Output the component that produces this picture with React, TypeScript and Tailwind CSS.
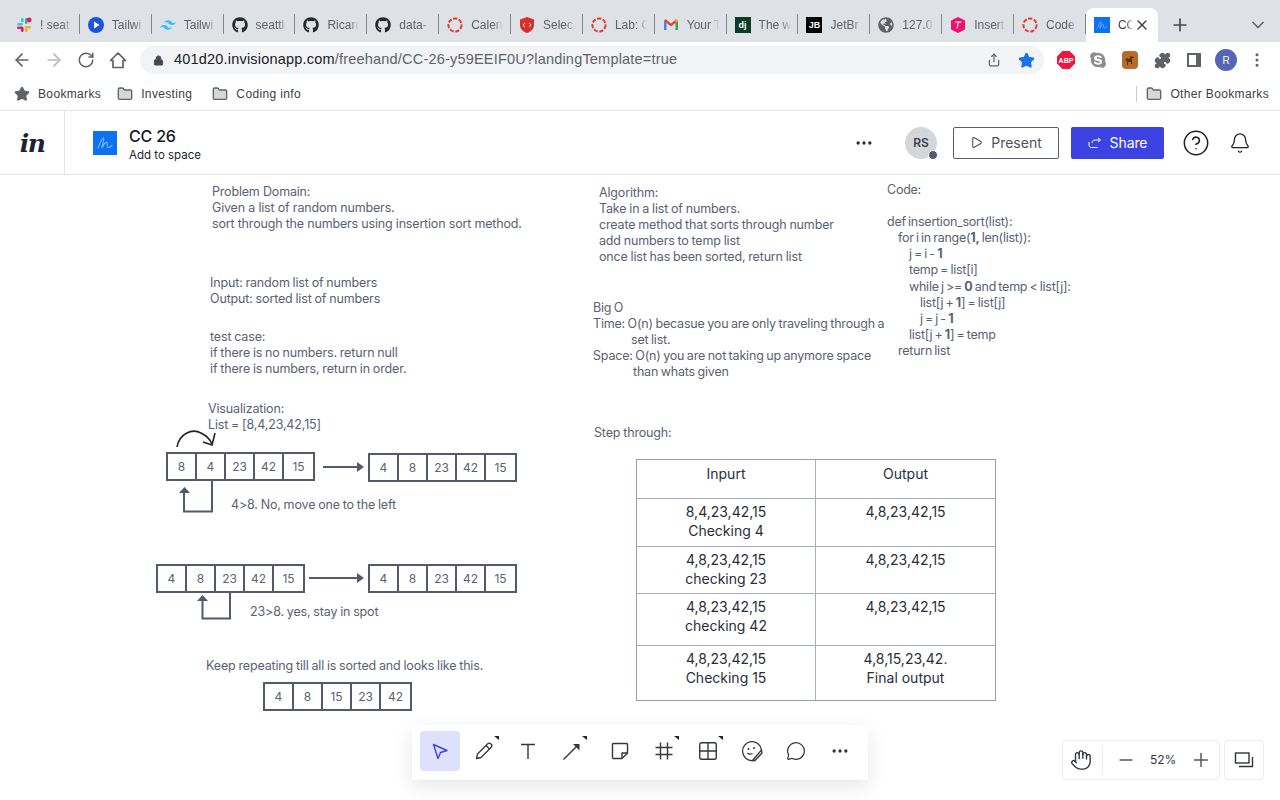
import { ReactNode } from "react";
import {
  ArrowLeft,
  ArrowRight,
  Bell,
  ChevronDown,
  CircleHelp,
  Ellipsis,
  EllipsisVertical,
  Folder,
  Grid2x2,
  Hand,
  Lock,
  MessageCircle,
  Minus,
  Play,
  Plus,
  Puzzle,
  RotateCw,
  Share,
  Star,
  X,
} from "lucide-react";
import { FaGithub, FaGlobeAmericas, FaSkype } from "react-icons/fa";
import { SiTailwindcss } from "react-icons/si";

const Slack = () => (
  <svg viewBox="0 0 16 16" className="w-4 h-4">
    <rect x="1" y="6" width="6" height="2.6" rx="1.3" fill="#36c5f0" />
    <rect x="5" y="1" width="2.6" height="4.2" rx="1.3" fill="#36c5f0" />
    <rect x="9" y="1" width="2.6" height="6" rx="1.3" fill="#2eb67d" />
    <circle cx="13.2" cy="3" r="2.4" fill="#e01e5a" />
    <rect x="9" y="9" width="6" height="2.6" rx="1.3" fill="#ecb22e" />
    <rect x="9" y="11" width="2.6" height="4" rx="1.3" fill="#ecb22e" />
    <rect x="1" y="9.4" width="6" height="2.6" rx="1.3" fill="#e01e5a" />
    <rect x="5" y="10" width="2.6" height="5" rx="1.3" fill="#e01e5a" />
  </svg>
);

const PlayCircle = () => (
  <svg viewBox="0 0 16 16" className="w-4 h-4">
    <circle cx="8" cy="8" r="8" fill="#1a56db" />
    <path d="M6 4.5 11.5 8 6 11.5z" fill="#fff" />
  </svg>
);

const RedRing = () => (
  <svg viewBox="0 0 16 16" className="w-4 h-4">
    <circle cx="8" cy="8" r="6.6" fill="none" stroke="#e8392f" strokeWidth="2" strokeDasharray="4.2 1.6" />
  </svg>
);

const Shield = () => (
  <svg viewBox="0 0 16 16" className="w-4 h-4">
    <path d="M8 0 15 2.5V8c0 4-3 6.6-7 8C4 14.600 1 12 1 8V2.500z" fill="#d9302c" />
    <path d="M6 6 4 8l2 2M10 6l2 2-2 2" fill="none" stroke="#fff" strokeWidth="1" />
  </svg>
);

const Gmail = () => (
  <svg viewBox="0 0 16 16" className="w-4 h-4">
    <path d="M1 13V4l2.500 1.500V13z" fill="#4285f4" />
    <path d="M15 13V4l-2.500 1.500V13z" fill="#34a853" />
    <path d="M1 4c0-1.500 1.500-2 2.500-1.200L8 6.500 12.500 2.800C13.500 2 15 2.500 15 4l-7 5.500z" fill="#ea4335" />
    <path d="M12.500 5.500 15 4c0-.8-.5-1.400-1-1.500l-1.500.3z" fill="#fbbc04" />
  </svg>
);

const Badge = ({ bg, children }: { bg: string; children: ReactNode }) => (
  <div className={`w-4 h-4 flex items-center justify-center text-white font-bold text-[9px] leading-none ${bg}`}>
    {children}
  </div>
);

const Hexagon = () => (
  <svg viewBox="0 0 16 16" className="w-4 h-4">
    <path d="M8 0 15 3.500v9L8 16 1 12.500v-9z" fill="#f0116f" />
    <path d="M5 5h6.500M8.500 5 7 11.500" stroke="#fff" strokeWidth="1" fill="none" />
  </svg>
);

const Squiggle = ({ className }: { className: string }) => (
  <div className={`bg-[#0b73f0] flex items-center justify-center ${className}`}>
    <svg viewBox="0 0 24 24" className="w-full h-full">
      <path
        d="M5 17 C7 12 9 7 10.500 7 C11.500 8 9 15 9 17 C10.500 13 13 10.500 14 11.500 C14.500 13 13.500 16 15 16.500 C16.500 16.500 18 15.500 19 14.500"
        fill="none"
        stroke="#7fb6f7"
        strokeWidth="1.100"
        strokeLinecap="round"
      />
    </svg>
  </div>
);

// labels are only what is visible before the tab fades out
const tabs: { icon: ReactNode; label: string }[] = [
  { icon: <Slack />, label: "! seat" },
  { icon: <PlayCircle />, label: "Tailwi" },
  { icon: <SiTailwindcss className="w-4 h-4 text-[#38bdf8]" />, label: "Tailwi" },
  { icon: <FaGithub className="w-4 h-4 text-[#24292f]" />, label: "seattl" },
  { icon: <FaGithub className="w-4 h-4 text-[#24292f]" />, label: "Ricard" },
  { icon: <FaGithub className="w-4 h-4 text-[#24292f]" />, label: "data-" },
  { icon: <RedRing />, label: "Calen" },
  { icon: <Shield />, label: "Selec" },
  { icon: <RedRing />, label: "Lab: C" },
  { icon: <Gmail />, label: "Your T" },
  { icon: <Badge bg="bg-[#0c3c26]">dj</Badge>, label: "The w" },
  { icon: <Badge bg="bg-black">JB</Badge>, label: "JetBr" },
  { icon: <FaGlobeAmericas className="w-4 h-4 text-[#5f6368]" />, label: "127.0" },
  { icon: <Hexagon />, label: "Insert" },
  { icon: <RedRing />, label: "Code" },
];

function TabStrip() {
  return (
    <div className="h-[42px] bg-[#dee1e6] flex items-end pl-2">
      {tabs.map((tab, i) => (
        <div key={i} className="w-[71.870px] h-[34px] flex items-center pl-2 gap-2 relative shrink-0">
          <div className="w-4 h-4 shrink-0">{tab.icon}</div>
          <span className="w-[32px] whitespace-nowrap text-xs text-[#5f6368] [mask-image:linear-gradient(to_right,black_70%,transparent)]">
            {tab.label}
          </span>
          <div className="absolute right-0 top-[6px] h-5 w-px bg-[#80868b]" />
        </div>
      ))}
      <div className="relative w-[72px] h-[34px] bg-white rounded-t-lg flex items-center pl-2 gap-2 shrink-0">
        <Squiggle className="w-4 h-4 shrink-0" />
        <span className="whitespace-nowrap text-xs text-[#3c4043] [mask-image:linear-gradient(to_right,black_50%,transparent_90%)]">CC</span>
        <div className="absolute left-[48px] top-[9px] w-4 h-4 bg-white">
          <X className="w-4 h-4 text-[#3c4043]" />
        </div>
      </div>
      <Plus className="w-5 h-5 text-[#45494e] ml-[12px] mb-[7px]" />
      <ChevronDown className="w-5 h-5 text-[#5f6368] ml-[58px] mb-[7px]" />
    </div>
  );
}

function AddressBar() {
  return (
    <div className="h-9 bg-white flex items-center">
      <div className="w-[140px] flex items-center text-[#5f6368] pl-[12px] gap-[12px] shrink-0">
        <ArrowLeft className="w-5 h-5" />
        <ArrowRight className="w-5 h-5 text-[#b5b8bc]" />
        <RotateCw className="w-5 h-5 p-px" />
        <svg viewBox="0 0 20 20" className="w-5 h-5" fill="none" stroke="currentColor" strokeWidth="1.700" strokeLinejoin="round">
          <path d="M10 3 2.500 10.500H5V17.500H15V10.500H17.500z" />
        </svg>
      </div>
      <div className="w-[904px] h-7 rounded-full bg-[#f1f3f4] flex items-center pl-[13px] pr-[9px] shrink-0">
        <Lock className="w-[11px] h-[11px] text-[#45494e] fill-[#45494e]" />
        <span className="ml-[10px] text-[14.500px] text-[#5f6368] tracking-[0.2px] whitespace-nowrap">
          <span className="text-[#202124]">401d20.invisionapp.com</span>/freehand/CC-26-y59EEIF0U?landingTemplate=true
        </span>
        <Share className="w-[14px] h-[16px] text-[#5f6368] ml-auto mr-[17px]" />
        <Star className="w-[17px] h-[17px] text-[#1a73e8] fill-[#1a73e8]" />
      </div>
      <div className="flex items-center ml-[13px]">
        <div className="w-[18px] h-[18px] bg-[#f0153c] [clip-path:polygon(30%_0,70%_0,100%_30%,100%_70%,70%_100%,30%_100%,0_70%,0_30%)] flex items-center justify-center text-white font-bold text-[7px] leading-none">
          ABP
        </div>
        <FaSkype className="w-[18px] h-[18px] text-[#8a8d91] ml-[14px]" />
        <div className="w-4 h-[18px] bg-[#b8692c] rounded-sm ml-[15px] flex items-center justify-center">
          <svg viewBox="0 0 12 12" className="w-3 h-3">
            <path d="M1 6c1 0 1-2 2-2s1 1 2 1 1-3 2-3 1 1 3 1v1H8v6H7V8H4v3H3V7L1 6z" fill="#5d3212" />
          </svg>
        </div>
        <Puzzle className="w-[17px] h-[17px] text-[#5f6368] fill-[#5f6368] ml-[16px]" />
        <div className="w-[14px] h-[14px] border-2 border-r-[5px] border-[#5f6368] ml-[16px]" />
        <div className="w-[22px] h-[22px] rounded-full bg-[#5565b8] text-white text-[10px] flex items-center justify-center ml-[14px]">
          R
        </div>
        <EllipsisVertical className="w-[18px] h-[18px] text-[#5f6368] ml-[11px]" />
      </div>
    </div>
  );
}

function BookmarkBar() {
  const item = "flex items-center gap-2 text-xs text-[#3c4043] whitespace-nowrap tracking-[0.35px]";
  return (
    <div className="h-8 bg-white flex items-center pl-[14px]">
      <div className={item}>
        <Star className="w-4 h-4 text-[#5f6368] fill-[#5f6368]" />
        Bookmarks
      </div>
      <div className={`${item} ml-[16px]`}>
        <Folder className="w-4 h-4 text-[#5f6368] fill-[#d5d7da]" />
        Investing
      </div>
      <div className={`${item} ml-[20px]`}>
        <Folder className="w-4 h-4 text-[#5f6368] fill-[#d5d7da]" />
        Coding info
      </div>
      <div className="ml-auto flex items-center mr-[11px]">
        <div className="w-px h-4 bg-[#c8cacd] mr-[9px]" />
        <div className={item}>
          <Folder className="w-4 h-4 text-[#5f6368] fill-[#d5d7da]" />
          Other Bookmarks
        </div>
      </div>
    </div>
  );
}

function AppHeader() {
  return (
    <div className="h-[65px] bg-white border-y border-[#e4e4e4] flex items-center font-['Inter',sans-serif]">
      <div className="w-[65px] h-full border-r border-[#e4e4e4] flex items-center justify-center shrink-0">
        <span className="font-['DejaVu_Serif',serif] font-bold italic text-[25px] leading-none text-[#1f2230] tracking-[-1.5px] mt-[2px]">
          in
        </span>
      </div>
      <Squiggle className="w-6 h-6 ml-[28px]" />
      <div className="ml-3 mt-[4px] flex flex-col">
        <span className="text-base font-medium leading-[20px] text-[#15171f] tracking-[-0.2px]">CC 26</span>
        <span className="text-[11.500px] leading-[18px] text-[#22252e]">Add to space</span>
      </div>
      <div className="ml-auto flex items-center">
        <Ellipsis className="w-5 h-5 text-[#2a2d38]" />
        <div className="relative w-8 h-8 rounded-full bg-[#d5d6d9] ml-[31px] flex items-center justify-center text-xs font-semibold text-[#3b3f4a]">
          RS
          <div className="absolute right-[-1px] bottom-[-1px] w-[10px] h-[10px] rounded-full bg-[#535a70] border border-white" />
        </div>
        <button className="w-[106px] h-8 ml-4 border border-[#5a5d66] rounded-[2px] flex items-center justify-center gap-2 text-sm text-[#4e525c]">
          <Play className="w-[13px] h-[13px]" />
          Present
        </button>
        <button className="w-[93px] h-8 ml-3 bg-[#3d42e3] rounded-[2px] flex items-center justify-center gap-2 text-sm tracking-[-0.1px] text-white">
          <svg viewBox="0 0 14 14" className="w-[14px] h-[14px]" fill="none" stroke="#fff" strokeWidth="1">
            <path d="M1 6v3c0 1.500 1 2.500 2.500 2.500h6M4 7c0-2 1.500-3 3.500-3H12M10 2l2.500 2L10 6" />
          </svg>
          Share
        </button>
        <CircleHelp className="w-7 h-7 text-[#1e2028] ml-[18px]" strokeWidth={1.300} />
        <Bell className="w-[22px] h-[22px] text-[#1e2028] ml-[19px] mr-[29px]" strokeWidth={1.400} />
      </div>
    </div>
  );
}

function CellRow({ values, className }: { values: number[]; className: string }) {
  return (
    <div className={`absolute grid grid-cols-5 w-[149px] h-[29px] border-2 border-[#535a6b] divide-x-2 divide-[#535a6b] bg-white ${className}`}>
      {values.map((v, i) => (
        <div key={i} className="flex items-center justify-center text-xs text-[#5a6172]">
          {v}
        </div>
      ))}
    </div>
  );
}

const base = "absolute mt-px text-[12.500px] text-[#5a6172] whitespace-nowrap";
const note = `${base} leading-[16px] tracking-[-0.15px] [word-spacing:-0.5px]`;

function Canvas() {
  return (
    <div className="relative h-[625px] bg-white overflow-hidden font-['Inter',sans-serif]">
      <div className={`${base} leading-[16px] tracking-[-0.18px] left-[212px] top-[8px]`}>
        Problem Domain:
        <br />
        Given a list of random numbers.
        <br />
        sort through the numbers using insertion sort method.
      </div>
      <div className={`${note} left-[210px] top-[99px]`}>
        Input: random list of numbers
        <br />
        Output: sorted list of numbers
      </div>
      <div className={`${note} left-[210px] top-[153px]`}>
        test case:
        <br />
        if there is no numbers. return null
        <br />
        if there is numbers, return in order.
      </div>
      <div className={`${note} left-[208px] top-[225px]`}>
        Visualization:
        <br />
        List = [8,4,23,42,15]
      </div>
      <div className={`${note} left-[231px] top-[321px]`}>{"4>8. No, move one to the left"}</div>
      <div className={`${note} left-[250px] top-[428px]`}>{"23>8. yes, stay in spot"}</div>
      <div className={`${note} left-[206px] top-[482px]`}>Keep repeating till all is sorted and looks like this.</div>

      <div className={`${note} left-[599px] top-[9px]`}>
        Algorithm:
        <br />
        Take in a list of numbers.
        <br />
        create method that sorts through number
        <br />
        add numbers to temp list
        <br />
        once list has been sorted, return list
      </div>
      <div className={`${base} leading-[16px] tracking-[-0.18px] [word-spacing:-0.8px] left-[593px] top-[124px]`}>
        Big O
        <br />
        Time: O(n) becasue you are only traveling through a
        <br />
        <span className="ml-[38px]">set list.</span>
        <br />
        Space: O(n) you are not taking up anymore space
        <br />
        <span className="ml-[40px]">than whats given</span>
      </div>
      <div className={`${note} left-[594px] top-[249px]`}>Step through:</div>

      <div className={`${base} leading-[16.100px] tracking-[-0.25px] [word-spacing:-1px] left-[887px] top-[6px]`}>
        Code:
        <br />
        <br />
        def insertion_sort(list):
        <br />
        <span className="ml-[11px]">
          for i in range(<b>1,</b> len(list)):
        </span>
        <br />
        <span className="ml-[22px]">
          j = i - <b>1</b>
        </span>
        <br />
        <span className="ml-[22px]">temp = list[i]</span>
        <br />
        <span className="ml-[22px]">
          while j {">="} <b>0</b> and temp {"<"} list[j]:
        </span>
        <br />
        <span className="ml-[33px]">
          list[j + <b>1</b>] = list[j]
        </span>
        <br />
        <span className="ml-[33px]">
          j = j - <b>1</b>
        </span>
        <br />
        <span className="ml-[22px]">
          list[j + <b>1</b>] = temp
        </span>
        <br />
        <span className="ml-[11px]">return list</span>
      </div>

      <CellRow values={[8, 4, 23, 42, 15]} className="left-[166px] top-[277px]" />
      <CellRow values={[4, 8, 23, 42, 15]} className="left-[368px] top-[278px]" />
      <CellRow values={[4, 8, 23, 42, 15]} className="left-[156px] top-[389px]" />
      <CellRow values={[4, 8, 23, 42, 15]} className="left-[368px] top-[389px]" />
      <CellRow values={[4, 8, 15, 23, 42]} className="left-[263px] top-[507px]" />

      {/* arrows between the cell rows, coordinates are the canvas itself */}
      <svg className="absolute left-0 top-0 w-[1280px] h-[625px] pointer-events-none" viewBox="0 0 1280 625" fill="none">
        <path d="M177 272C179 259 192 253 201 258C207 261 210 264 212 269" stroke="#20232c" strokeWidth="1.600" />
        <path d="M203 267 212 270 215 258" stroke="#20232c" strokeWidth="1.600" />
        <path d="M323 292H358" stroke="#535a6b" strokeWidth="2" />
        <path d="M357 287 364 292 357 297z" fill="#535a6b" />
        <path d="M309 403H358" stroke="#535a6b" strokeWidth="2" />
        <path d="M357 398 364 403 357 408z" fill="#535a6b" />
        <path d="M184 317V336.500H212V306" stroke="#535a6b" strokeWidth="2" />
        <path d="M179 318 184.500 312 190 318z" fill="#535a6b" />
        <path d="M202.500 423V443.500H230V418" stroke="#535a6b" strokeWidth="2" />
        <path d="M197 426 202.500 420 208 426z" fill="#535a6b" />
      </svg>

      <StepTable />
      <FloatingTools />
      <ZoomControls />
    </div>
  );
}

const rows = [
  { h: "h-[48px]", input: ["8,4,23,42,15", "Checking 4"], output: ["4,8,23,42,15"] },
  { h: "h-[47px]", input: ["4,8,23,42,15", "checking 23"], output: ["4,8,23,42,15"] },
  { h: "h-[52px]", input: ["4,8,23,42,15", "checking 42"], output: ["4,8,23,42,15"] },
  { h: "h-[55px]", input: ["4,8,23,42,15", "Checking 15"], output: ["4,8,15,23,42.", "Final output"] },
];

function StepTable() {
  return (
    <div className="absolute left-[636px] top-[284px] w-[360px] border border-[#9aa1ae] text-[14px] leading-[19px] text-[#2a2e38] text-center">
      <div className="grid grid-cols-2 h-[38px] divide-x divide-[#a8aebb]">
        <div className="pt-[4px]">Inpurt</div>
        <div className="pt-[4px]">Output</div>
      </div>
      {rows.map((row, i) => (
        <div key={i} className={`grid grid-cols-2 border-t border-[#a8aebb] divide-x divide-[#a8aebb] ${row.h}`}>
          <div className="pt-[3px]">
            {row.input.map((t) => (
              <div key={t}>{t}</div>
            ))}
          </div>
          <div className="pt-[3px]">
            {row.output.map((t) => (
              <div key={t}>{t}</div>
            ))}
          </div>
        </div>
      ))}
    </div>
  );
}

const Corner = () => (
  <div className="absolute right-[7px] top-[5px] w-[5px] h-[4px] bg-[#23252e] [clip-path:polygon(0_0,100%_0,100%_100%)]" />
);

function Tool({ children, corner }: { children: ReactNode; corner?: boolean }) {
  return (
    <div className="relative w-11 h-10 flex items-center justify-center text-[#33363f]">
      {children}
      {corner && <Corner />}
    </div>
  );
}

function FloatingTools() {
  return (
    <div className="absolute left-[412px] top-[550px] w-[456px] h-[55px] bg-white rounded-sm shadow-[0_6px_20px_rgba(0,0,0,0.10)] flex items-start pl-[8px] pt-[6px]">
      <div className="w-10 h-10 mr-[2px] bg-[#dfe0fb] rounded-sm flex items-center justify-center">
        <svg viewBox="0 0 20 20" className="w-5 h-5" fill="none" stroke="#3d42e3" strokeWidth="1.400" strokeLinejoin="round">
          <path d="M3.500 3.500 17 9.500 10.500 11.500 8 17.500z" />
        </svg>
      </div>
      <Tool corner>
        <svg viewBox="0 0 20 20" className="w-5 h-5" fill="none" stroke="currentColor" strokeWidth="1.300" strokeLinejoin="round">
          <path d="M2.500 17.500 3.500 13 13.500 3c1-1 2.500-1 3.500 0s1 2.500 0 3.500L7 16.500z" />
          <path d="M12 4.500 15.500 8" />
        </svg>
      </Tool>
      <Tool>
        <svg viewBox="0 0 20 20" className="w-5 h-5" fill="none" stroke="currentColor" strokeWidth="1.400">
          <path d="M3 3.500H17M10 3.500V18" />
        </svg>
      </Tool>
      <Tool corner>
        <svg viewBox="0 0 20 20" className="w-5 h-5" fill="none" stroke="currentColor" strokeWidth="1.400">
          <path d="M1.500 18.500 16 4" />
          <path d="M11 3H17.500V9.500z" fill="currentColor" stroke="none" />
        </svg>
      </Tool>
      <div className="w-[4px]" />
      <Tool>
        <svg viewBox="0 0 20 20" className="w-5 h-5" fill="none" stroke="currentColor" strokeWidth="1.400" strokeLinejoin="round">
          <path d="M2.500 3.500c0-.5.5-1 1-1h13c.5 0 1 .5 1 1V12l-5.500 5.500H3.500c-.5 0-1-.5-1-1z" />
          <path d="M17.500 12H12v5.500" />
        </svg>
      </Tool>
      <Tool corner>
        <svg viewBox="0 0 20 20" className="w-5 h-5" fill="none" stroke="currentColor" strokeWidth="1.400">
          <path d="M6.500 1.500V18.500M13.500 1.500V18.500M1.500 6.500H18.500M1.500 13.500H18.500" />
        </svg>
      </Tool>
      <Tool corner>
        <Grid2x2 className="w-[22px] h-[22px]" strokeWidth={1.500} />
      </Tool>
      <Tool>
        <svg viewBox="0 0 22 22" className="w-[22px] h-[22px]" fill="none" stroke="currentColor" strokeWidth="1.300">
          <path d="M12 20.500A9.500 9.500 0 1 1 20.500 10" />
          <path d="M11.500 20.500 20.500 10 21 13 14 20.500z" fill="#fff" />
          <circle cx="7.500" cy="9" r="1" fill="currentColor" stroke="none" />
          <circle cx="13" cy="8" r="1" fill="currentColor" stroke="none" />
          <path d="M6.500 13c1.500 1.500 3 1.500 5 .5" />
        </svg>
      </Tool>
      <Tool>
        <MessageCircle className="w-5 h-5" strokeWidth={1.500} />
      </Tool>
      <Tool>
        <Ellipsis className="w-5 h-5" />
      </Tool>
    </div>
  );
}

function ZoomControls() {
  return (
    <div className="absolute left-[1062px] top-[565px] flex gap-1 text-[#33363f]">
      <div className="w-[158px] h-10 border border-[#ececec] rounded flex items-center bg-white">
        <Hand className="w-[22px] h-[22px] ml-[7px]" strokeWidth={1.500} />
        <div className="w-px h-7 bg-[#ececec] ml-[10px]" />
        <Minus className="w-5 h-5 ml-[13px] text-[#555]" />
        <span className="ml-[14px] text-xs">52%</span>
        <Plus className="w-[22px] h-[22px] ml-[14px] text-[#555]" strokeWidth={1.600} />
      </div>
      <div className="w-10 h-10 border border-[#ececec] rounded flex items-center justify-center bg-white">
        <svg viewBox="0 0 20 20" className="w-5 h-5" fill="none" stroke="currentColor" strokeWidth="1.400">
          <rect x="1.500" y="3" width="13.500" height="10" />
          <path d="M18.500 7v9.500H5" />
        </svg>
      </div>
    </div>
  );
}

export default function App() {
  return (
    <div className="w-[1280px] h-[800px] overflow-hidden bg-white font-['Liberation_Sans',sans-serif]">
      <TabStrip />
      <AddressBar />
      <BookmarkBar />
      <AppHeader />
      <Canvas />
    </div>
  );
}
